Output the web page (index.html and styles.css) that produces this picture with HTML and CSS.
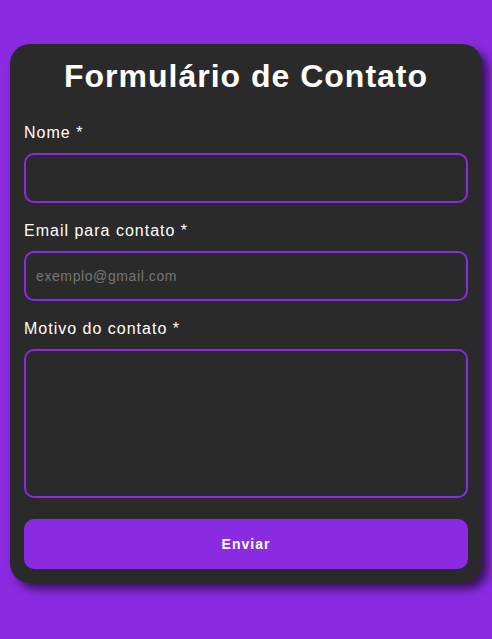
FILE: index.html
```html
<!DOCTYPE html>
<html lang="pt-BR">
<head>
<meta charset="utf-8">
<title>Formulário de Contato</title>
<link rel="stylesheet" href="styles.css">
</head>
<body>
<form class="card">
  <h1 class="title">Formulário de Contato</h1>
  <label class="label" for="nome">Nome *</label>
  <input class="field" id="nome" type="text">
  <label class="label" for="email">Email para contato *</label>
  <input class="field" id="email" type="email" placeholder="exemplo@gmail.com">
  <label class="label" for="motivo">Motivo do contato *</label>
  <textarea class="field area" id="motivo"></textarea>
  <button class="submit" type="button">Enviar</button>
</form>
</body>
</html>
```
FILE: styles.css
```css
* { box-sizing: border-box; }
html, body { margin: 0; }
body {
  background: #8a2be2;
  padding: 44px 10px;
  font-family: "Liberation Sans", Arial, sans-serif;
  min-height: 639px;
}
.card {
  background: #2a2a2a;
  border-radius: 20px;
  padding: 14px 14px 14px;
  box-shadow: 6px 6px 10px rgba(0,0,0,0.6);
  display: flex;
  flex-direction: column;
}
.title {
  margin: 0 0 29px;
  color: #fff;
  font-size: 32px;
  font-weight: bold;
  text-align: center;
  line-height: 37px;
  letter-spacing: 1px;
}
.label {
  color: #fff;
  font-size: 16px;
  line-height: 18px;
  letter-spacing: 1px;
  margin-bottom: 11px;
}
.field {
  display: block;
  width: 100%;
  height: 50px;
  background: #2a2a2a;
  border: 2px solid #8a2be2;
  border-radius: 10px;
  padding: 0 10px;
  color: #fff;
  font-family: "Liberation Sans", Arial, sans-serif;
  font-size: 14px;
  letter-spacing: 0.6px;
  margin: 0 0 19px;
  outline: none;
}
.field::placeholder { color: #777; }
.area {
  height: 149px;
  resize: none;
  padding: 10px;
  margin-bottom: 21px;
}
.submit {
  height: 50px;
  border: none;
  border-radius: 10px;
  background: #8a2be2;
  color: #fff;
  font-family: "Liberation Sans", Arial, sans-serif;
  font-weight: bold;
  font-size: 14px;
  letter-spacing: 1px;
  cursor: pointer;
}
```
